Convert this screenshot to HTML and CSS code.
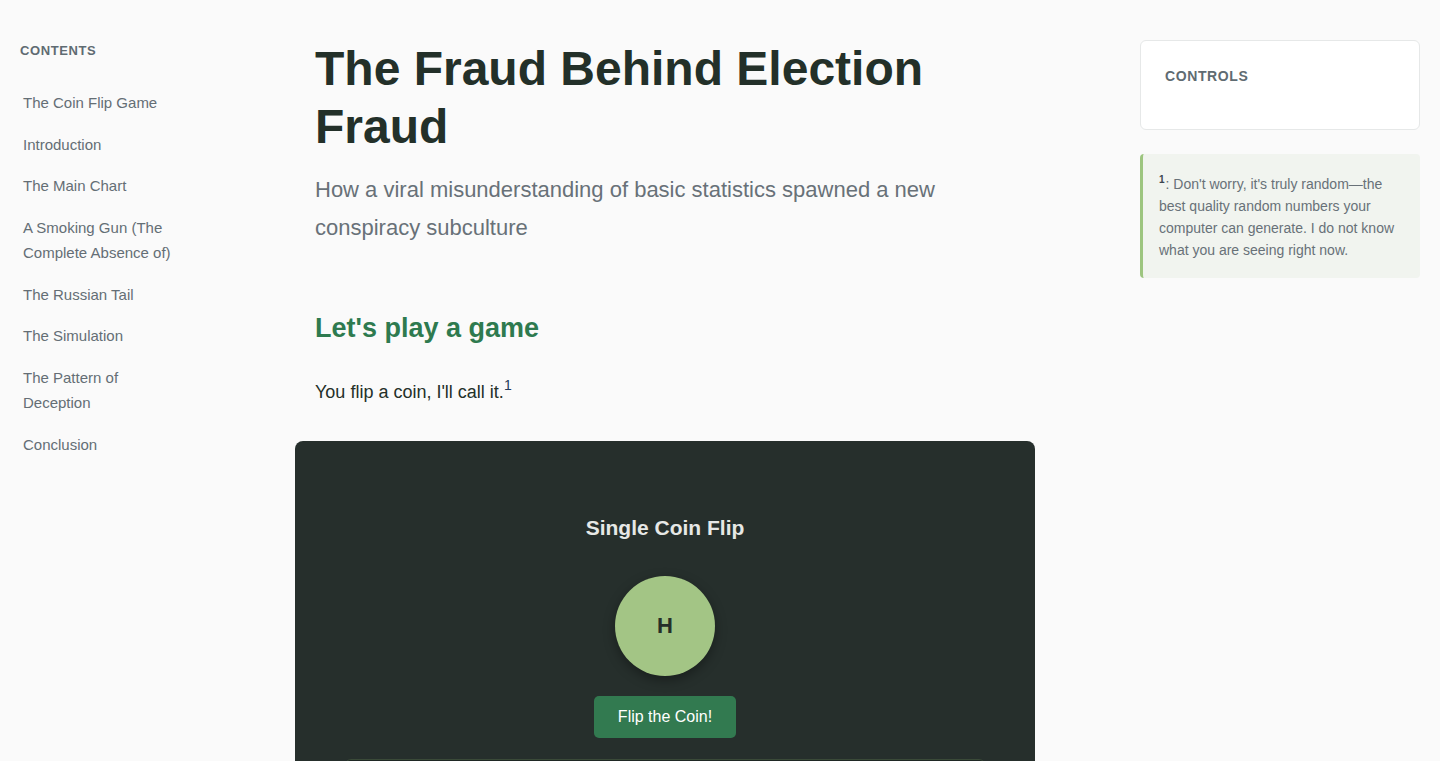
FILE: index.html
```html
<!DOCTYPE html>
<html lang="en">
<head>
<meta charset="utf-8">
<title>The Fraud Behind Election Fraud</title>
<link rel="stylesheet" href="styles.css">
</head>
<body>
<div class="layout">
  <nav class="toc">
    <h4 class="toc-title">Contents</h4>
    <ul class="toc-list">
      <li><a href="#">The Coin Flip Game</a></li>
      <li><a href="#">Introduction</a></li>
      <li><a href="#">The Main Chart</a></li>
      <li><a href="#">A Smoking Gun (The Complete Absence of)</a></li>
      <li><a href="#">The Russian Tail</a></li>
      <li><a href="#">The Simulation</a></li>
      <li><a href="#">The Pattern of Deception</a></li>
      <li><a href="#">Conclusion</a></li>
    </ul>
  </nav>

  <main class="article">
    <h1 class="title">The Fraud Behind Election Fraud</h1>
    <p class="subtitle">How a viral misunderstanding of basic statistics spawned a new conspiracy subculture</p>

    <h2 class="section-title">Let's play a game</h2>
    <p class="body-text">You flip a coin, I'll call it.<sup>1</sup></p>

    <section class="game-card">
      <h3 class="game-title">Single Coin Flip</h3>
      <div class="coin">H</div>
      <button class="flip-btn" type="button">Flip the Coin!</button>
      <div class="game-panel"></div>
    </section>
  </main>

  <aside class="side">
    <div class="controls">
      <h4 class="controls-title">Controls</h4>
    </div>
    <div class="footnote">
      <sup>1</sup>: Don't worry, it's truly random—the best quality random numbers your computer can generate. I do not know what you are seeing right now.
    </div>
  </aside>
</div>
</body>
</html>
```

FILE: styles.css
```css
* { box-sizing: border-box; }

html, body {
  margin: 0;
  padding: 0;
  background: #fafafa;
  font-family: "Liberation Sans", Arial, Helvetica, sans-serif;
  color: #243029;
  height: 761px;
  overflow: hidden;
}

.layout {
  display: grid;
  grid-template-columns: 200px 1fr 280px;
  padding-right: 20px;
}

/* Left TOC */
.toc {
  padding: 43px 20px 0 20px;
}

.toc-title {
  margin: 0 0 24px 0;
  font-size: 13px;
  font-weight: bold;
  letter-spacing: 0.6px;
  text-transform: uppercase;
  color: #5f6b72;
  line-height: 15px;
}

.toc-list {
  list-style: none;
  margin: 0;
  padding: 0;
}

.toc-list li {
  padding: 8px 3px;
  font-size: 15px;
  line-height: 25.5px;
}

.toc-list a {
  color: #646e75;
  text-decoration: none;
}

/* Main article */
.article {
  width: 700px;
  margin-left: 115px;
  padding-top: 40px;
}

.title {
  margin: 0;
  font-size: 48px;
  line-height: 58px;
  font-weight: bold;
  color: #233029;
}

.subtitle {
  margin: 15px 0 0 0;
  font-size: 22px;
  line-height: 38px;
  color: #687178;
}

.section-title {
  margin: 64px 0 0 0;
  font-size: 27px;
  line-height: 34px;
  font-weight: bold;
  color: #2e7a4f;
}

.body-text {
  margin: 32px 0 0 0;
  font-size: 18px;
  line-height: 30px;
  color: #243029;
}

.body-text sup {
  font-size: 14px;
  line-height: 0;
  vertical-align: 8px;
  color: #243a5a;
}

/* Game card */
.game-card {
  margin: 34px -20px 0 -20px;
  background: #262f2c;
  border-radius: 8px;
  padding: 74px 50px 0 50px;
  display: flex;
  flex-direction: column;
  align-items: center;
}

.game-title {
  margin: 0;
  font-size: 21px;
  line-height: 26px;
  font-weight: bold;
  color: #e6e8e6;
  flex-shrink: 0;
}

.coin {
  margin-top: 35px;
  flex-shrink: 0;
  width: 100px;
  height: 100px;
  border-radius: 50%;
  background: #a3c585;
  color: #263029;
  font-size: 22px;
  font-weight: bold;
  display: flex;
  align-items: center;
  justify-content: center;
  box-shadow: 0 4px 12px rgba(0, 0, 0, 0.35);
}

.flip-btn {
  margin-top: 20px;
  flex-shrink: 0;
  width: 142px;
  height: 42px;
  border: none;
  border-radius: 5px;
  background: #327a50;
  color: #ffffff;
  font-family: "Liberation Sans", Arial, sans-serif;
  font-size: 16px;
}

.game-panel {
  margin-top: 21px;
  flex-shrink: 0;
  align-self: stretch;
  height: 200px;
  background: #1f2824;
  border-top: 1px solid #3a4a38;
  border-radius: 6px 6px 0 0;
}

/* Right side */
.side {
  padding-top: 40px;
}

.controls {
  background: #ffffff;
  border: 1px solid #e6e8e8;
  border-radius: 6px;
  padding: 25px 24px 24px 24px;
  height: 90px;
}

.controls-title {
  margin: 0;
  font-size: 14px;
  line-height: 20px;
  font-weight: bold;
  letter-spacing: 0.6px;
  text-transform: uppercase;
  color: #5f6b72;
}

.footnote {
  margin-top: 24px;
  background: #f1f4ef;
  border-left: 3px solid #9dc57f;
  border-radius: 4px;
  padding: 19px 16px 17px 16px;
  font-size: 14px;
  line-height: 22px;
  color: #687178;
}

.footnote sup {
  font-size: 10px;
  font-weight: bold;
  line-height: 0;
  vertical-align: 6px;
  margin-right: 1px;
  color: #3d4650;
}
```
